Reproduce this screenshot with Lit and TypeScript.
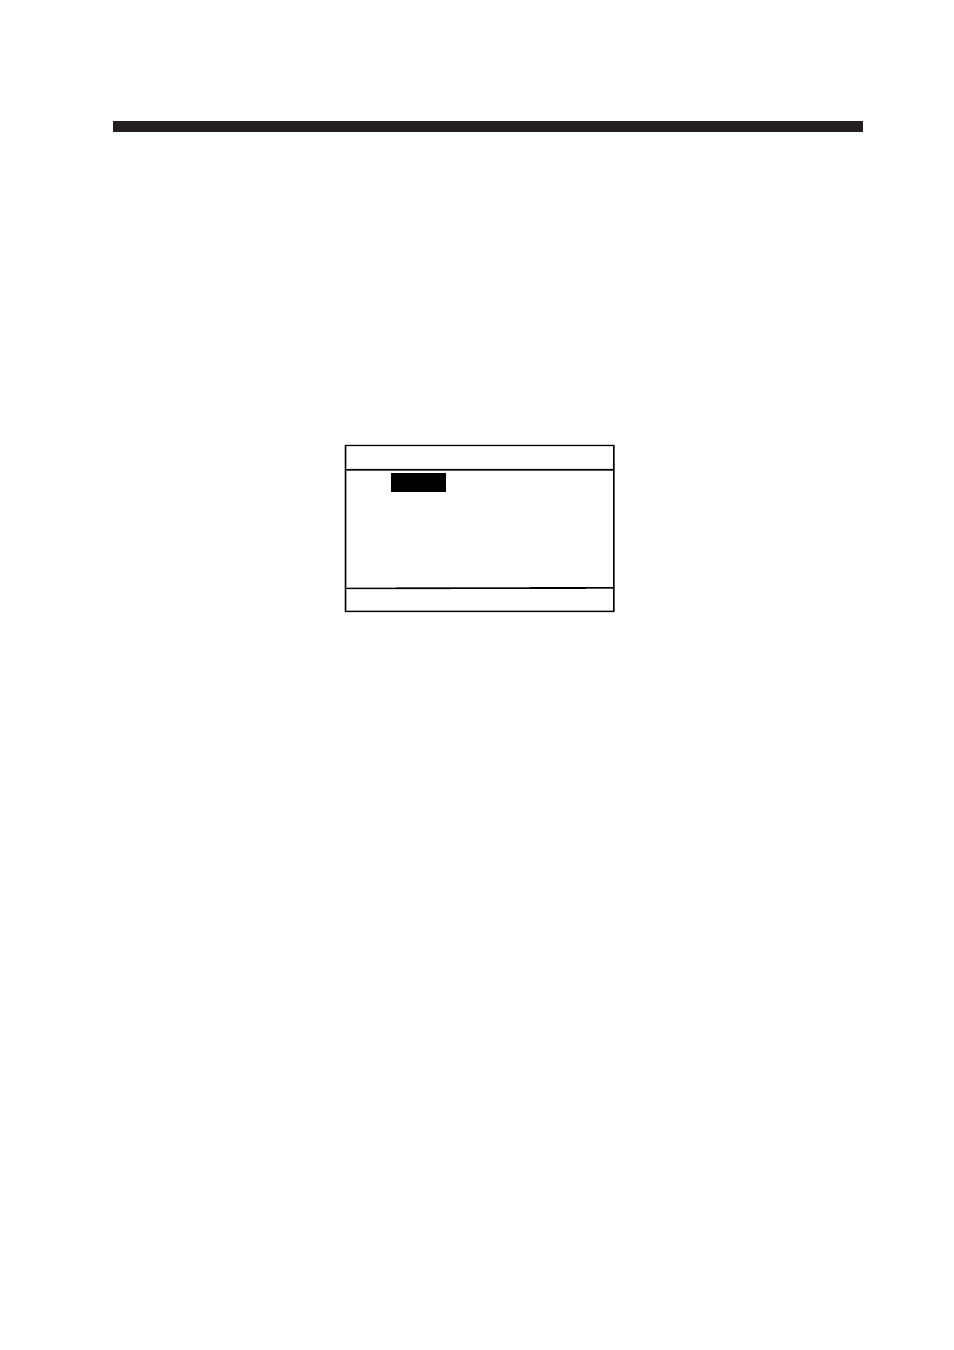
import { LitElement, html, css } from "lit";
import { customElement } from "lit/decorators.js";

@customElement("lcd-screen")
class LcdScreen extends LitElement {
  static styles = css`
    :host {
      display: block;
    }
    .screen {
      box-sizing: border-box;
      border: 1px solid #000;
      box-shadow: -1px 0 #b5b5b5, 0 -1px #c8c8c8, 1px 0 #555, 0 1px #dcdcdc,
        inset 1px 0 #a0a0a0, inset 0 1px #dcdcdc, inset 0 -1px #a5a5a5;
    }
    .title {
      height: 23px;
      border-bottom: 1px solid #000;
      box-shadow: 0 1px #50544f, inset 0 -1px #dfe5df;
    }
    .body {
      height: 114px;
      padding-top: 3px;
      padding-left: 45px;
    }
    .selection {
      width: 55px;
      height: 19px;
      background: #000;
    }
    .rule {
      display: block;
      width: 100%;
      height: 3px;
    }
    .footer {
      height: 21px;
    }
  `;

  render() {
    return html`
      <section class="screen">
        <div class="title"></div>
        <div class="body"><div class="selection"></div></div>
        <svg class="rule" viewBox="0 0 267 3" preserveAspectRatio="none"
          shape-rendering="crispEdges" aria-hidden="true">
          <rect x="0" y="1" width="267" height="1" fill="#000" />
          <rect x="0" y="0" width="50" height="1" fill="#a8a8a8" />
          <rect x="50" y="0" width="134" height="1" fill="#555" />
          <rect x="184" y="0" width="83" height="1" fill="#000" />
          <rect x="240" y="1" width="27" height="1" fill="#555" />
          <rect x="0" y="2" width="105" height="1" fill="#dcdcdc" />
        </svg>
        <div class="footer"></div>
      </section>
    `;
  }
}

@customElement("app-root")
class AppRoot extends LitElement {
  static styles = css`
    :host {
      display: block;
      box-sizing: border-box;
      min-height: 100vh;
      padding: 121px 91px 0 113px;
      background: #fff;
      font-family: "Liberation Sans", Arial, sans-serif;
    }
    .bar {
      height: 11px;
      background: #231f20;
    }
    .figure {
      display: grid;
      grid-template-columns: 232fr 269fr 249fr;
      padding-top: 313px;
    }
    .display {
      grid-column: 2;
    }
  `;

  render() {
    return html`
      <header class="bar"></header>
      <main class="figure">
        <lcd-screen class="display"></lcd-screen>
      </main>
    `;
  }
}
